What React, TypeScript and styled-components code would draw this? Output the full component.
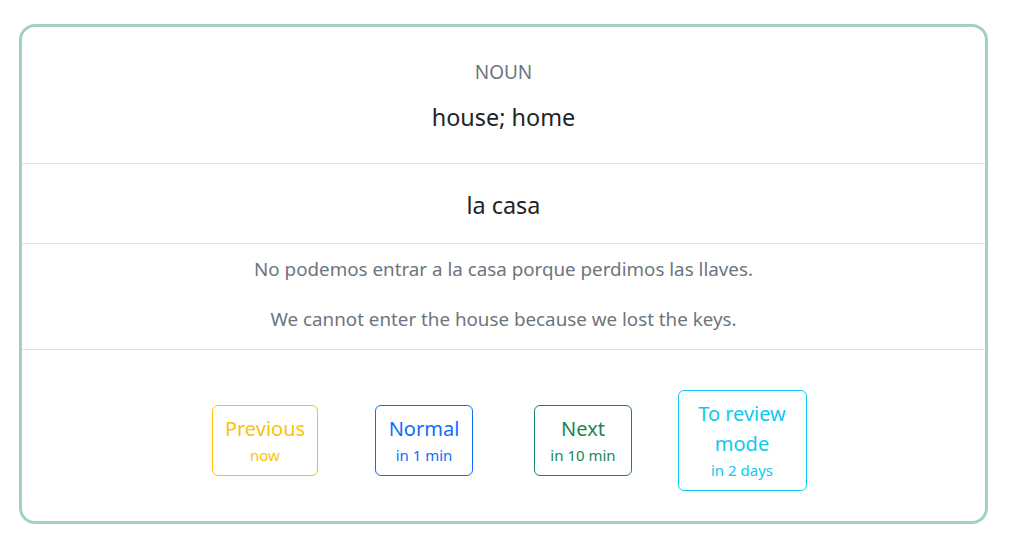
import React from "react";
import styled, { createGlobalStyle } from "styled-components";

const GlobalStyle = createGlobalStyle`
  html, body { margin: 0; padding: 0; background: #fff; }
  body { font-family: "Noto Sans", "Open Sans", sans-serif; color: #212529; }
  * { box-sizing: border-box; }
`;

const Page = styled.div`
  padding: 24px 21px 0 19px;
`;

const Card = styled.div`
  border: 3px solid #a3d1bb;
  border-radius: 16px;
  background: #fff;
  display: flex;
  flex-direction: column;
`;

const Section = styled.div<{ $pt: number; $pb: number; $gap?: number }>`
  display: flex;
  flex-direction: column;
  align-items: center;
  padding: ${(p) => p.$pt}px 0 ${(p) => p.$pb}px;
  gap: ${(p) => p.$gap ?? 0}px;
  & + & { border-top: 1px solid #dee2e6; }
`;

const Pos = styled.div`
  font-size: 19px;
  line-height: 27px;
  color: #6c757d;
  text-transform: uppercase;
`;

const Big = styled.div`
  font-size: 23.4px;
  line-height: 36px;
  color: #212529;
`;

const Example = styled.div`
  font-size: 18.8px;
  line-height: 27px;
  color: #6c757d;
`;

const Buttons = styled.div`
  display: flex;
  justify-content: center;
  align-items: center;
  padding: 40px 0 30px;
  border-top: 1px solid #dee2e6;
`;

const Col = styled.div`
  width: 159px;
  display: flex;
  justify-content: center;
`;

const Btn = styled.button<{ $c: string; $w: number }>`
  width: ${(p) => p.$w}px;
  border: 1px solid ${(p) => p.$c};
  color: ${(p) => p.$c};
  background: transparent;
  border-radius: 6px;
  padding: 8px 10px 9px;
  font-family: inherit;
  display: flex;
  flex-direction: column;
  align-items: center;
  cursor: pointer;
`;

const Main = styled.span`
  font-size: 20px;
  line-height: 30px;
`;

const Sub = styled.span`
  font-size: 15px;
  line-height: 22px;
`;

const buttons = [
  { label: "Previous", sub: "now", c: "#ffc107", w: 106 },
  { label: "Normal", sub: "in 1 min", c: "#0d6efd", w: 98 },
  { label: "Next", sub: "in 10 min", c: "#198754", w: 98 },
  { label: "To review mode", sub: "in 2 days", c: "#0dcaf0", w: 129 },
];

export default function App() {
  return (
    <>
      <GlobalStyle />
      <Page>
        <Card>
          <Section $pt={32} $pb={28} $gap={13}>
            <Pos>Noun</Pos>
            <Big>house; home</Big>
          </Section>
          <Section $pt={23} $pb={20}>
            <Big>la casa</Big>
          </Section>
          <Section $pt={12} $pb={16} $gap={23}>
            <Example>No podemos entrar a la casa porque perdimos las llaves.</Example>
            <Example>We cannot enter the house because we lost the keys.</Example>
          </Section>
          <Buttons>
            {buttons.map((b) => (
              <Col key={b.label}>
                <Btn $c={b.c} $w={b.w}>
                  <Main>{b.label}</Main>
                  <Sub>{b.sub}</Sub>
                </Btn>
              </Col>
            ))}
          </Buttons>
        </Card>
      </Page>
    </>
  );
}
